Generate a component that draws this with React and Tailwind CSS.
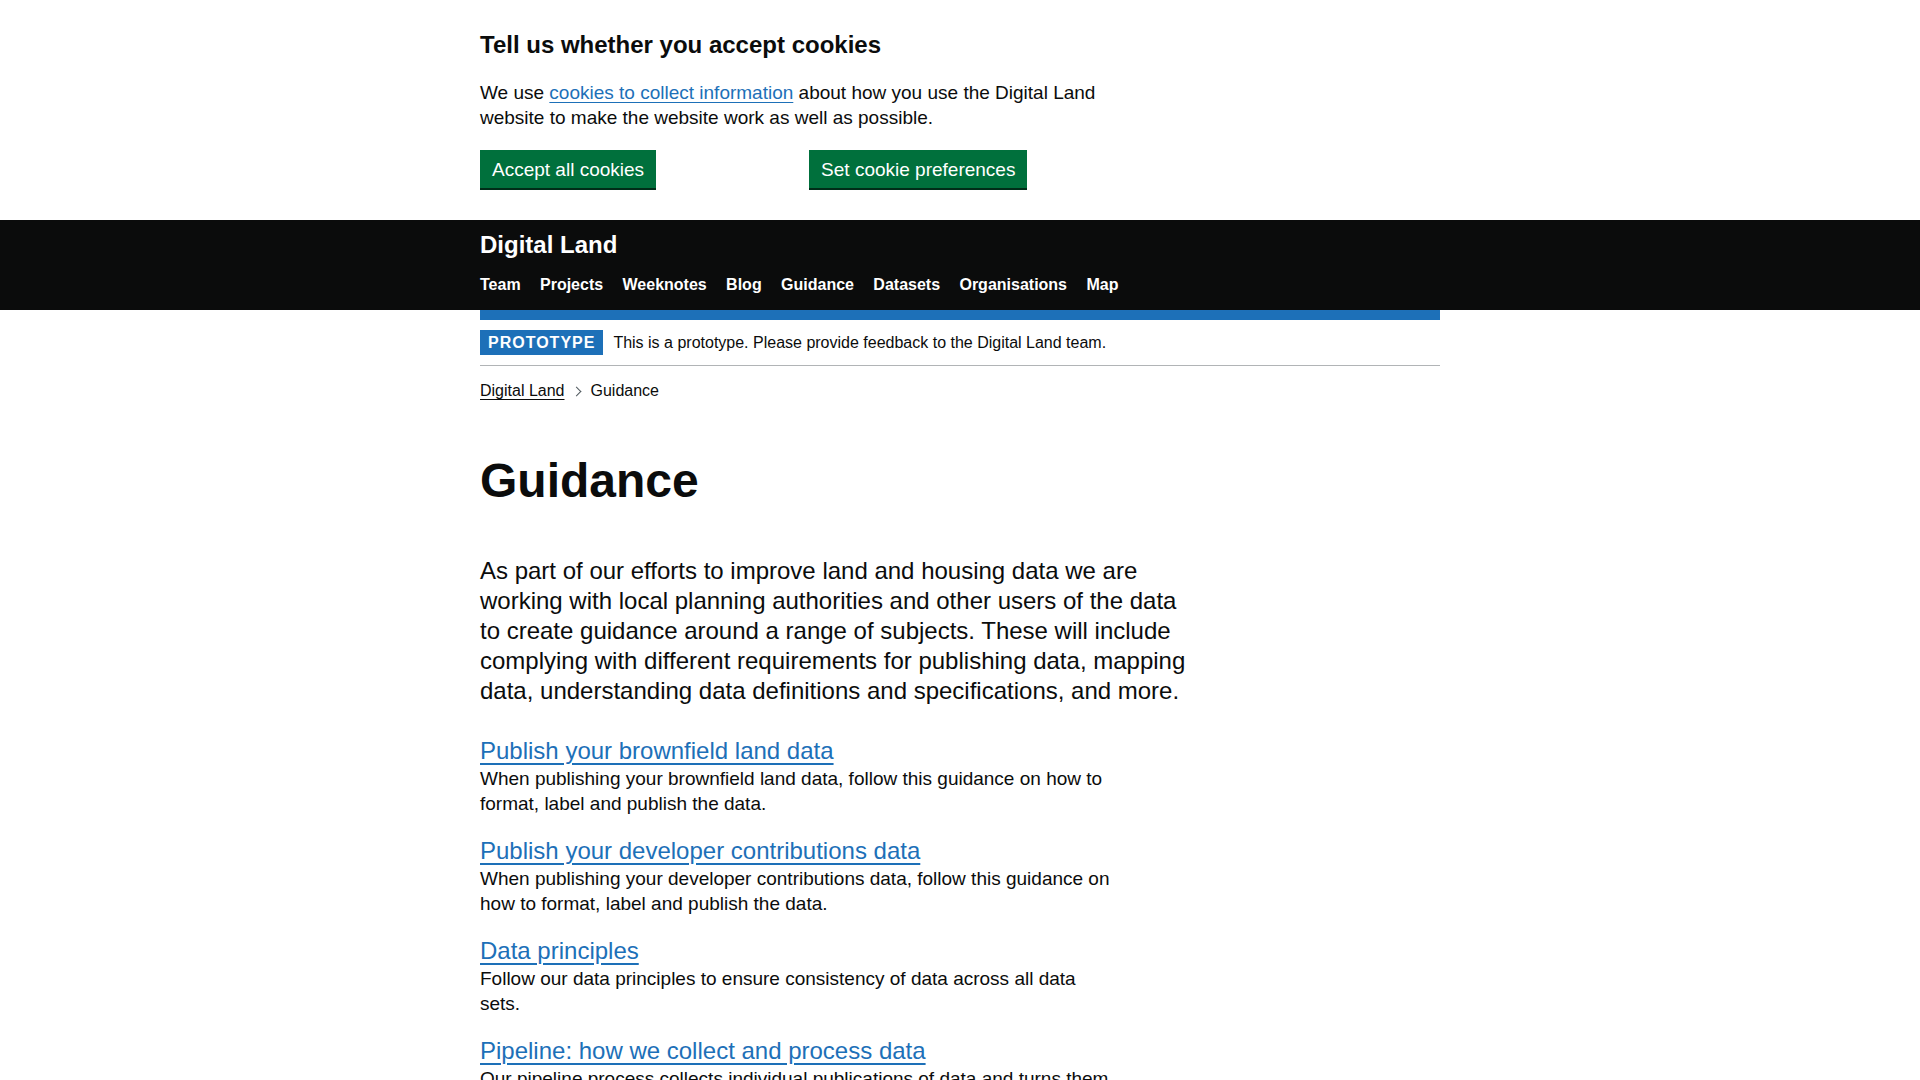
const navItems = ['Team', 'Projects', 'Weeknotes', 'Blog', 'Guidance', 'Datasets', 'Organisations', 'Map']

const guides = [
  {
    title: 'Publish your brownfield land data',
    text: 'When publishing your brownfield land data, follow this guidance on how to format, label and publish the data.'
  },
  {
    title: 'Publish your developer contributions data',
    text: 'When publishing your developer contributions data, follow this guidance on how to format, label and publish the data.'
  },
  {
    title: 'Data principles',
    text: 'Follow our data principles to ensure consistency of data across all data sets.'
  },
  {
    title: 'Pipeline: how we collect and process data',
    text: 'Our pipeline process collects individual publications of data and turns them into a single national dataset.'
  }
]

function CookieBanner() {
  return (
    <div className="w-[960px] mx-auto pt-[30px] pb-[32px]">
      <h2 className="text-[24px] leading-[30px] font-bold">Tell us whether you accept cookies</h2>
      <p className="mt-[20px] w-[630px] text-[19px] leading-[25px]">
        We use{' '}
        <a href="#" className="text-[#1d70b8] underline underline-offset-[3px]">
          cookies to collect information
        </a>{' '}
        about how you use the Digital Land website to make the website work as well as possible.
      </p>
      <div className="mt-[20px] flex">
        <button className="bg-[#00703c] text-white text-[19px] leading-[19px] px-[12px] pt-[10px] pb-[9px] shadow-[0_2px_0_#002d18]">
          Accept all cookies
        </button>
        <button className="ml-[153px] bg-[#00703c] text-white text-[19px] leading-[19px] px-[12px] pt-[10px] pb-[9px] shadow-[0_2px_0_#002d18]">
          Set cookie preferences
        </button>
      </div>
    </div>
  )
}

function Header() {
  return (
    <header className="bg-[#0b0c0c] text-white">
      <div className="w-[960px] mx-auto pt-[10px] pb-[15px]">
        <a href="#" className="block text-[24px] leading-[30px] font-bold">Digital Land</a>
        <nav className="mt-[15px] flex gap-[19.4px] text-[16px] leading-[20px] font-bold">
          {navItems.map((item) => (
            <a key={item} href="#">{item}</a>
          ))}
        </nav>
      </div>
    </header>
  )
}

export default function App() {
  return (
    <div className="min-h-screen bg-white text-[#0b0c0c] font-['Liberation_Sans',Arial,sans-serif]">
      <CookieBanner />
      <Header />
      <div className="w-[960px] mx-auto">
        <div className="h-[10px] bg-[#1d70b8]" />
        <div className="flex items-center py-[10px] border-b border-[#b1b4b6]">
          <strong className="bg-[#1d70b8] text-white text-[16px] leading-[16px] font-bold uppercase tracking-[1px] px-[8px] pt-[5px] pb-[4px]">
            Prototype
          </strong>
          <span className="ml-[10px] text-[16px] leading-[20px]">
            This is a prototype. Please provide feedback to the Digital Land team.
          </span>
        </div>

        <div className="mt-[15px] flex items-center text-[16px] leading-[20px]">
          <a href="#" className="underline underline-offset-[3px]">Digital Land</a>
          <span className="ml-[10px] mr-[9px] w-[7px] h-[7px] border-t border-r border-[#505a5f] rotate-45 -translate-x-[2px]" />
          <span>Guidance</span>
        </div>

        <main>
          <h1 className="mt-[55px] text-[48px] leading-[50px] font-bold">Guidance</h1>
          <p className="mt-[50px] w-[713px] text-[24px] leading-[30px]">
            As part of our efforts to improve land and housing data we are working with local planning
            authorities and other users of the data to create guidance around a range of subjects. These will
            include complying with different requirements for publishing data, mapping data, understanding data
            definitions and specifications, and more.
          </p>

          <ul className="mt-[30px] flex flex-col gap-[20px] pb-[40px]">
            {guides.map((g) => (
              <li key={g.title}>
                <a href="#" className="text-[24px] leading-[30px] text-[#1d70b8] underline underline-offset-[4px]">
                  {g.title}
                </a>
                <p className="w-[630px] text-[19px] leading-[25px]">{g.text}</p>
              </li>
            ))}
          </ul>
        </main>
      </div>
    </div>
  )
}
